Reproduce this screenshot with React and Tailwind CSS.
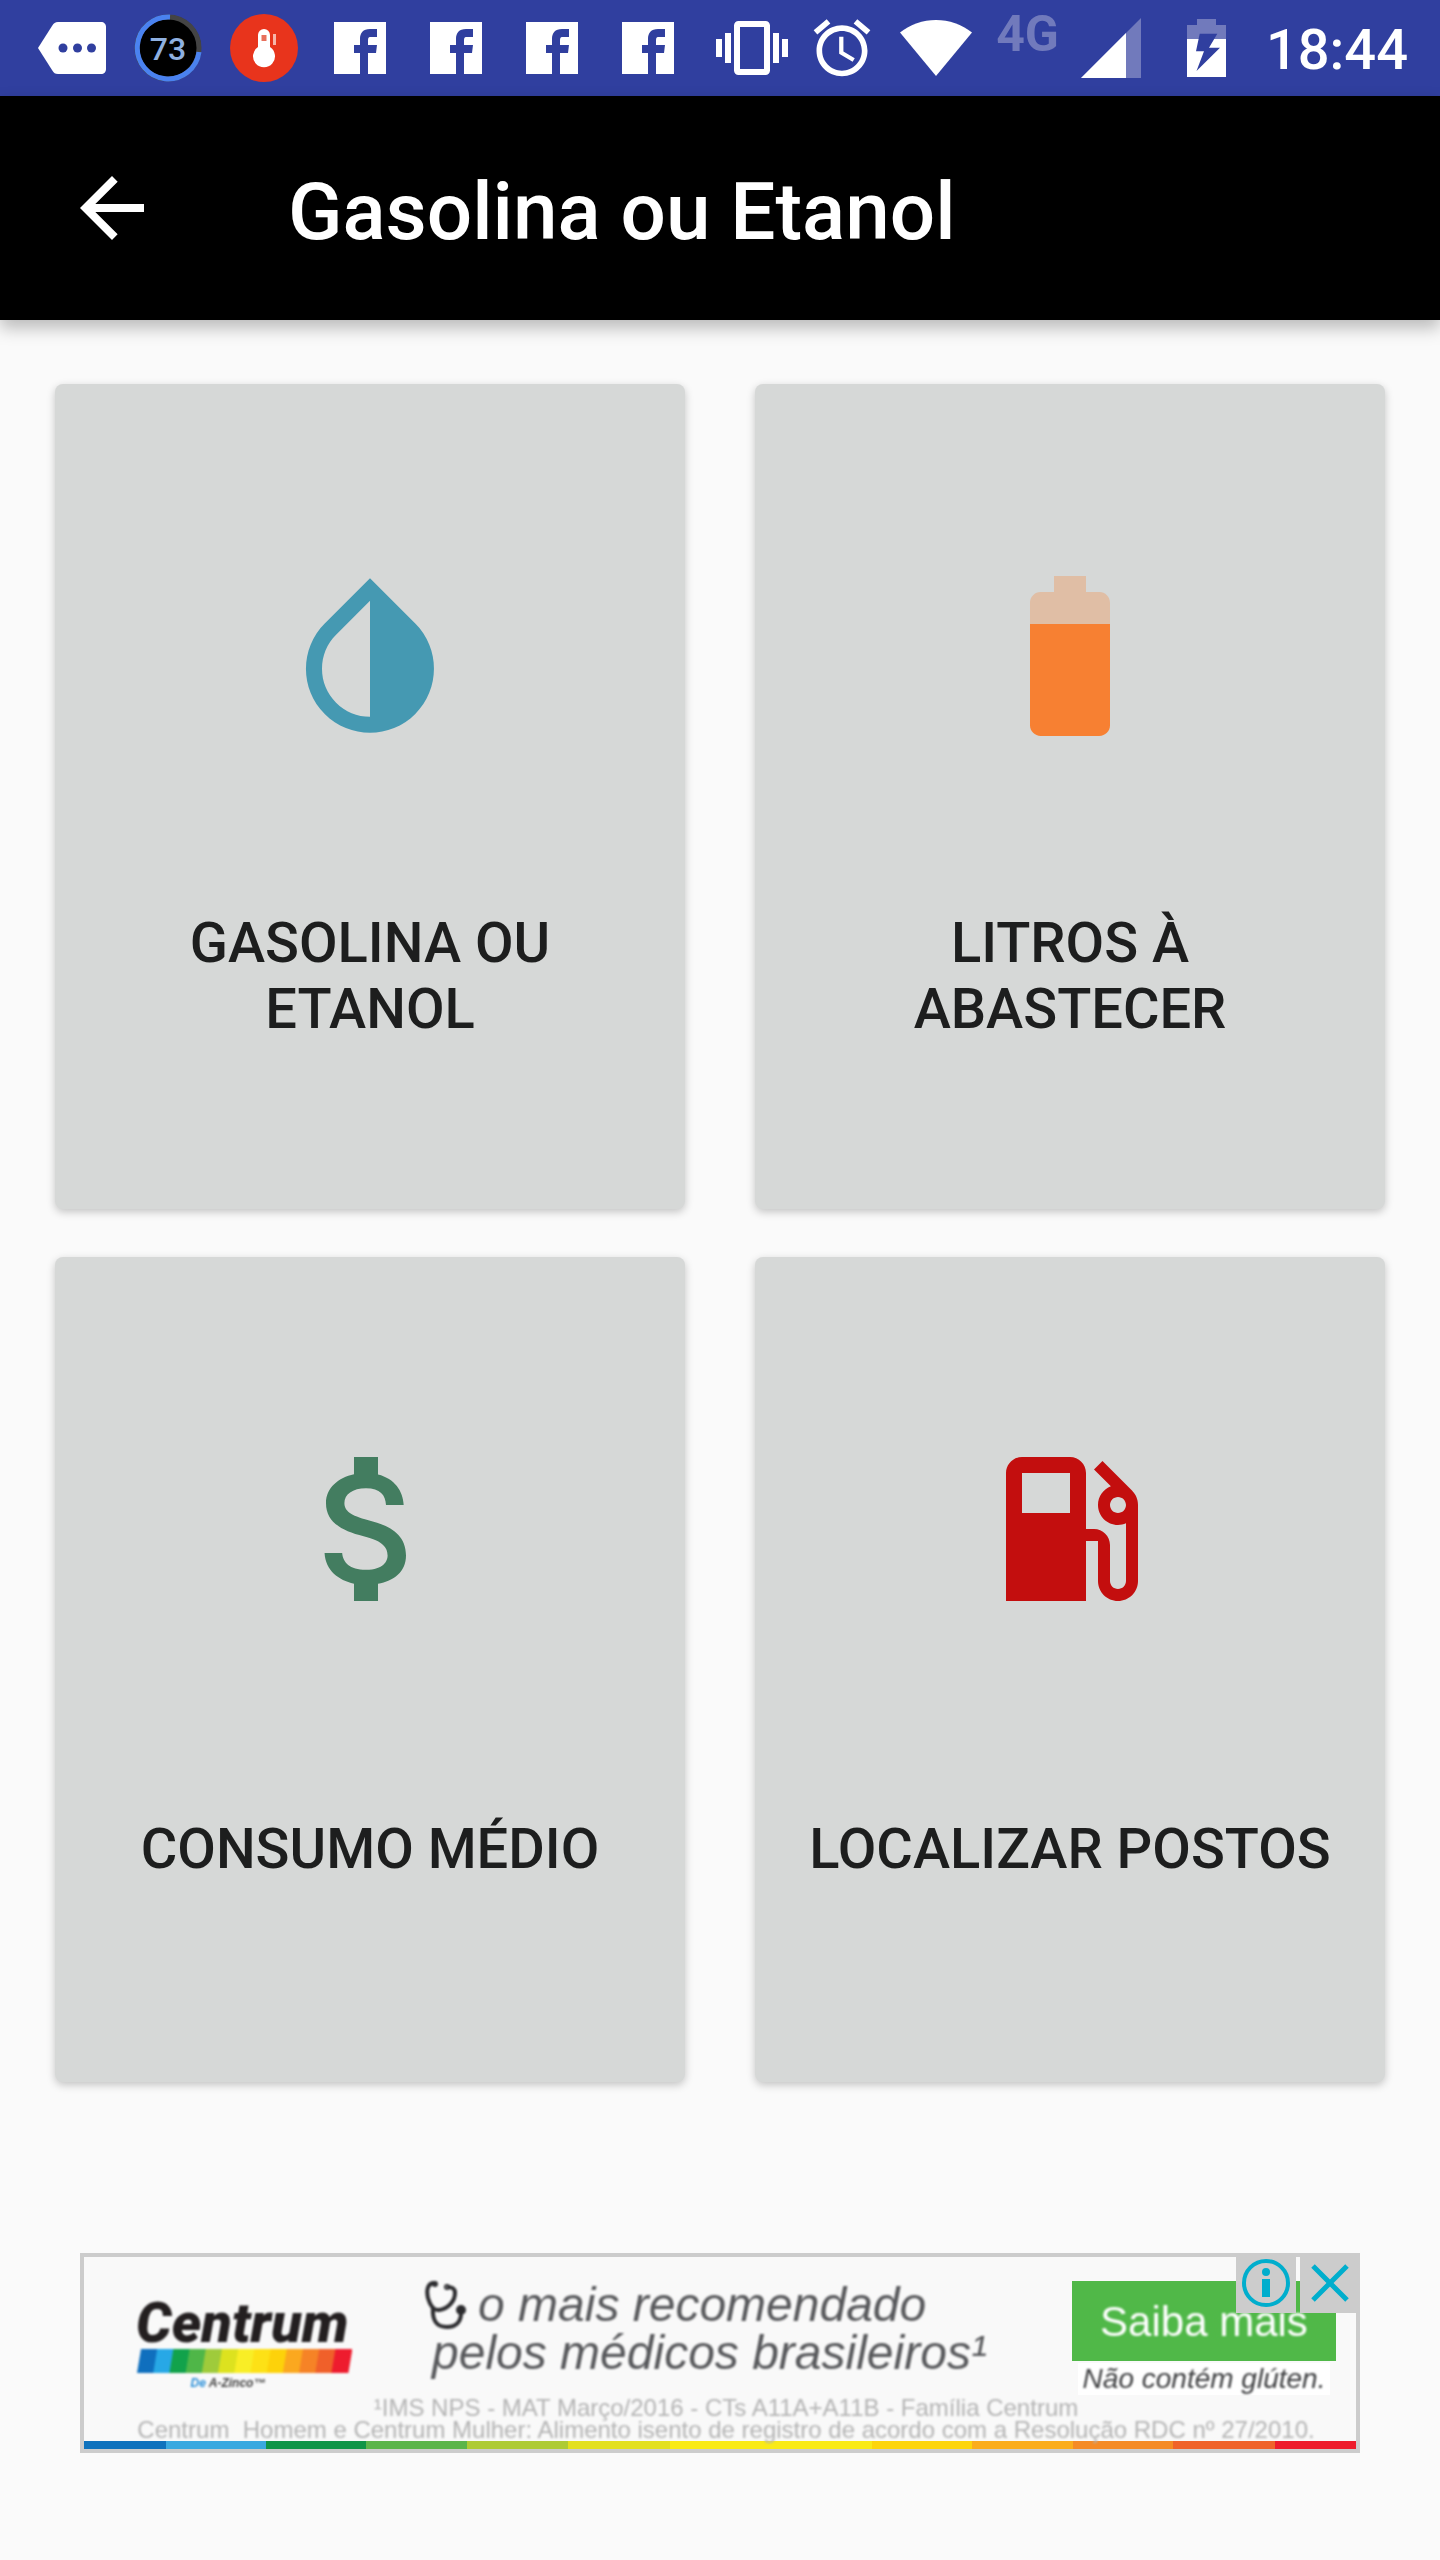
const TILES = [
  {
    label: 'GASOLINA OU ETANOL',
    color: 'text-[#4599b2]',
    shapes: (
      <path d="M17.66 7.93L12 2.27 6.34 7.93c-3.12 3.12-3.12 8.19 0 11.31C7.9 20.8 9.95 21.58 12 21.58s4.1-.78 5.66-2.34c3.12-3.12 3.12-8.19 0-11.31zM12 19.59c-1.6 0-3.11-.62-4.24-1.76C6.62 16.69 6 15.19 6 13.59s.62-3.11 1.76-4.24L12 5.1v14.49z" />
    ),
  },
  {
    label: 'LITROS À ABASTECER',
    color: 'text-[#f78032]',
    shapes: (
      <>
        <path fillOpacity=".3" d="M17 5.33C17 4.6 16.4 4 15.67 4H14V2h-4v2H8.33C7.6 4 7 4.6 7 5.33V8h10V5.33z" />
        <path d="M7 8v12.67C7 21.4 7.6 22 8.33 22h7.33c.74 0 1.34-.6 1.34-1.33V8H7z" />
      </>
    ),
  },
  {
    label: 'CONSUMO MÉDIO',
    color: 'text-[#437d60]',
    shapes: (
      <path d="M11.8 10.9c-2.27-.59-3-1.2-3-2.15 0-1.09 1.01-1.85 2.7-1.85 1.78 0 2.44.85 2.5 2.1h2.21c-.07-1.72-1.12-3.3-3.21-3.81V3h-3v2.16c-1.94.42-3.5 1.68-3.5 3.61 0 2.31 1.91 3.46 4.7 4.13 2.5.6 3 1.48 3 2.41 0 .69-.49 1.79-2.7 1.79-2.06 0-2.87-.92-2.98-2.1h-2.2c.12 2.19 1.76 3.42 3.68 3.83V21h3v-2.15c1.95-.37 3.5-1.5 3.5-3.55 0-2.84-2.43-3.81-4.7-4.4z" />
    ),
  },
  {
    label: 'LOCALIZAR POSTOS',
    color: 'text-[#c30e0e]',
    shapes: (
      <path d="M19.77 7.23l.01-.01-3.72-3.72L15 4.56l2.11 2.11c-.94.36-1.61 1.26-1.61 2.33 0 1.38 1.12 2.5 2.5 2.5.36 0 .69-.08 1-.21v7.21c0 .55-.45 1-1 1s-1-.45-1-1V14c0-1.1-.9-2-2-2h-1V5c0-1.1-.9-2-2-2H6c-1.1 0-2 .9-2 2v16h10v-7.5h1.5v5c0 1.38 1.12 2.5 2.5 2.5s2.5-1.12 2.5-2.5V9c0-.69-.28-1.32-.73-1.77zM12 10H6V5h6v5zm6 0c-.55 0-1-.45-1-1s.45-1 1-1 1 .45 1 1-.45 1-1 1z" />
    ),
  },
];

const STRIP = [
  'grow-[82] bg-[#0f72bd]',
  'grow-[100] bg-[#3aa9e0]',
  'grow-[100] bg-[#0f9547]',
  'grow-[101] bg-[#5bb54a]',
  'grow-[101] bg-[#aecb35]',
  'grow-[102] bg-[#e3e01f]',
  'grow-[202] bg-[#f9ea17]',
  'grow-[100] bg-[#fdd50c]',
  'grow-[101] bg-[#fbad1c]',
  'grow-[100] bg-[#f58b25]',
  'grow-[102] bg-[#f0632a]',
  'grow-[81] bg-[#ee1c2c]',
];

const RAINBOW = ['#0f6fbe', '#27a8e6', '#12a24b', '#4fb648', '#9fcb3b', '#dde21f', '#f9ee26', '#fde116', '#fdd20a', '#fba81f', '#f68326', '#f0602a', '#ee1c2e'];

function FacebookIcon() {
  return (
    <svg className="mx-2 h-13 w-13 flex-none" viewBox="0 0 52 52" aria-label="Facebook">
      <path fill="#fff" d="M0 0h52v52H34V31h8l1-8h-9v-5c0-2.500 1-3 3-3h6V7h-7c-7 0-10 4-10 10v6h-6v8h6v21H0z" />
    </svg>
  );
}

function StatusBar() {
  return (
    <div className="flex h-24 items-center justify-between bg-[#303f9f] pl-[38px] pr-8 text-white">
      <div className="flex items-center gap-7">
        <svg className="h-13 w-17 flex-none" viewBox="0 0 68 52" fill="#fff" aria-label="Mensagens">
          <path d="M0 26L14 4c2-3 3-4 6-4h43c3 0 5 2 5 5v42c0 3-2 5-5 5H20c-3 0-4-1-6-4z" />
          <g fill="#303f9f">
            <circle cx="25" cy="26" r="4.500" />
            <circle cx="39.500" cy="26" r="4.500" />
            <circle cx="53.500" cy="26" r="4.500" />
          </g>
        </svg>
        <div className="relative flex h-17 w-17 flex-none items-center justify-center">
          <svg className="absolute inset-0 h-17 w-17" viewBox="0 0 68 68" fill="none">
            <circle cx="34" cy="34" r="33" fill="#000" />
            <circle cx="34" cy="34" r="31" stroke="#444" strokeWidth="5" />
            <path d="M36 3a31 31 0 1 0 29 35" stroke="#4a82f0" strokeWidth="5" />
          </svg>
          <span className="relative pt-0.5 text-[32px] font-medium leading-8 text-[#8fb0e0]">73</span>
        </div>
        <svg className="h-17 w-17 flex-none" viewBox="0 0 68 68" aria-label="Temperatura">
          <circle cx="34" cy="34" r="34" fill="#e8341c" />
          <path fill="#fff" d="M28 21a6 6 0 0 1 12 0v12a11 11 0 1 1-12 0z" />
          <path d="M34 21v6" stroke="#e8705c" strokeWidth="5" />
          <path d="M44.500 20v11" stroke="#f7b5aa" strokeWidth="3" />
        </svg>
        <FacebookIcon />
        <FacebookIcon />
        <FacebookIcon />
        <FacebookIcon />
      </div>
      <div className="flex items-center">
        <svg className="h-18 w-18 flex-none" viewBox="0 0 24 24" fill="#fff" aria-label="Vibrar">
          <path d="M0 15h2V9H0v6zm3 2h2V7H3v10zm19-8v6h2V9h-2zm-3 8h2V7h-2v10zM16.500 3h-9C6.670 3 6 3.670 6 4.500v15c0 .83.67 1.500 1.500 1.500h9c.83 0 1.500-.67 1.500-1.500v-15c0-.83-.67-1.500-1.500-1.500zM16 19H8V5h8v14z" />
        </svg>
        <svg className="ml-5 h-17 w-17 flex-none" viewBox="0 0 24 24" fill="#fff" aria-label="Alarme">
          <path d="M22 5.720l-4.600-3.860-1.290 1.530 4.600 3.860L22 5.720zM7.880 3.390L6.600 1.860 2 5.710l1.290 1.530 4.590-3.850zM12.500 8H11v6l4.750 2.850.75-1.230-4-2.370V8zM12 4c-4.970 0-9 4.030-9 9s4.020 9 9 9c4.970 0 9-4.030 9-9s-4.030-9-9-9zm0 16c-3.870 0-7-3.130-7-7s3.130-7 7-7 7 3.130 7 7-3.130 7-7 7z" />
        </svg>
        <svg className="ml-6 h-14 w-18 flex-none" viewBox="0 0 72 56" fill="#fff" aria-label="Wi-Fi">
          <path d="M0 12.500C10 4.500 23 0 36 0s26 4.500 36 12.500L36 56z" />
        </svg>
        <span className="ml-6 pb-7 text-[50px] font-bold leading-[56px] text-[#717abc]">4G</span>
        <svg className="ml-[22px] h-15 w-15 flex-none" viewBox="0 0 60 60" aria-label="Sinal">
          <path fill="#717abc" d="M60 0v60H0z" />
          <path fill="#fff" d="M45 15v45H0z" />
        </svg>
        <svg className="ml-[46px] h-[58px] w-[39px] flex-none" viewBox="0 0 39 58" aria-label="Bateria">
          <path fill="#717abc" d="M0 6h10V0h19v6h10v15H0z" />
          <path fill="#fff" d="M0 20h39v38H0z" />
          <path fill="#303f9f" d="M12.700 14.700H30.300L22 28.700H33L9.500 52 17 32.300H9z" />
        </svg>
        <time className="ml-10 pt-1 text-[56px] font-medium leading-[56px]">18:44</time>
      </div>
    </div>
  );
}

function AppBar() {
  return (
    <header className="flex h-56 items-center gap-32 bg-black px-16 text-white shadow-[0_8px_16px_rgba(0,0,0,0.26)]">
      <button type="button" aria-label="Voltar" className="flex-none">
        <svg className="h-24 w-24" viewBox="0 0 24 24" fill="currentColor">
          <path d="M20 11H7.830l5.590-5.590L12 4l-8 8 8 8 1.410-1.410L7.830 13H20v-2z" />
        </svg>
      </button>
      <h1 className="pt-2 text-[80px] font-medium leading-24">Gasolina ou Etanol</h1>
    </header>
  );
}

function Tile({ label, color, shapes }) {
  return (
    <button
      type="button"
      className="flex min-h-[825px] flex-col items-center rounded-lg bg-[#d6d8d7] px-10 pb-2.5 pt-44 shadow-[0_3px_8px_rgba(0,0,0,0.22)]"
    >
      <svg className={`h-48 w-48 flex-none ${color}`} viewBox="0 0 24 24" fill="currentColor" aria-hidden="true">
        {shapes}
      </svg>
      <span className="flex flex-1 items-center text-center text-[56px] font-medium leading-[66px] text-[#1d1e1e]">
        {label}
      </span>
    </button>
  );
}

function CentrumLogo() {
  return (
    <div className="w-[216px] flex-none pt-10 blur-[1px]">
      <div className="whitespace-nowrap font-[Roboto,sans-serif] text-[56px] font-black italic leading-[52px] text-[#231f20]">
        Centrum
      </div>
      <svg className="h-6 w-[216px]" viewBox="0 0 216 24" aria-hidden="true">
        {RAINBOW.map((fill, i) => (
          <path key={fill} fill={fill} d={`M${5 + i * 16.200} 0h17l-4 24h-17z`} />
        ))}
      </svg>
      <div className="pr-8 text-center text-[12px] font-bold italic leading-5 text-[#444]">
        <span className="text-[#2a8fd8]">De </span>A-Zinco™
      </div>
    </div>
  );
}

function AdBanner() {
  return (
    <aside
      aria-label="Anúncio"
      className="relative mx-[25px] mt-[171px] border-4 border-[#cccccc] bg-[#f9f9f9] font-['Liberation_Sans',sans-serif]"
    >
      <div className="flex h-[140px] items-start pl-13 pr-5">
        <CentrumLogo />
        <div className="ml-18 whitespace-nowrap pt-6 text-[48px] italic leading-12 text-[#58595c] blur-[1px]">
          <div className="flex items-center gap-2.5">
            <svg className="h-12 w-11 flex-none" viewBox="0 0 44 48" fill="none" stroke="#2b2b2e" strokeWidth="4">
              <path d="M12 2C4 1 2 8 4 17c2 7 5 13 11 12 9-1 16-9 16-17 0-5-3-6-8-6" />
              <path d="M9 27c-1 13 4 19 14 19 9 0 14-5 14-14" />
              <circle cx="37" cy="29" r="3" fill="#2b2b2e" />
              <circle cx="11" cy="3" r="1" />
              <circle cx="23" cy="6" r="1" />
            </svg>
            <span>o mais recomendado</span>
          </div>
          <div className="pl-2">pelos médicos brasileiros¹</div>
        </div>
        <div className="ml-auto w-66 flex-none pt-6">
          <a href="#saiba-mais" className="flex h-20 items-center justify-center bg-[#50b848] pt-0.5 text-[42px] leading-12 text-white">
            <span className="blur-[1px]">Saiba mais</span>
          </a>
          <div className="mx-1.5 mt-0.5 whitespace-nowrap bg-white text-center text-[28px] italic leading-8 text-[#3f4042]">
            <span className="blur-[1px]">Não contém glúten.</span>
          </div>
        </div>
      </div>
      <div className="whitespace-nowrap pl-3 text-center text-[24px] leading-[22px] text-[#b4b4b4] blur-[1px]">
        <p>¹IMS NPS - MAT Março/2016 - CTs A11A+A11B - Família Centrum</p>
        <p>Centrum&nbsp; Homem e Centrum Mulher: Alimento isento de registro de acordo com a Resolução RDC nº 27/2010.</p>
      </div>
      <div className="flex h-2">
        {STRIP.map((segment) => (
          <div key={segment} className={segment} />
        ))}
      </div>
      <div className="absolute -right-1 -top-1 flex gap-1">
        <button type="button" aria-label="Informações do anúncio" className="bg-[#cccccc]">
          <svg className="h-15 w-15" viewBox="0 0 60 60" fill="none">
            <circle cx="30" cy="30" r="22" stroke="#00aecd" strokeWidth="4" />
            <circle cx="30" cy="19" r="4" fill="#00aecd" />
            <path d="M30 26v18" stroke="#00aecd" strokeWidth="8" />
          </svg>
        </button>
        <button type="button" aria-label="Fechar anúncio" className="bg-[#cccccc]">
          <svg className="h-15 w-15" viewBox="0 0 60 60" fill="none" stroke="#00aecd" strokeWidth="5">
            <path d="M13 13l34 34M47 13L13 47" />
          </svg>
        </button>
      </div>
    </aside>
  );
}

export default function App() {
  return (
    <div className="min-h-screen bg-[#fafafa] font-[Roboto,sans-serif]">
      <StatusBar />
      <AppBar />
      <main className="px-[55px] pb-[107px] pt-16">
        <div className="grid grid-cols-2 gap-x-[70px] gap-y-12">
          {TILES.map((tile) => (
            <Tile key={tile.label} {...tile} />
          ))}
        </div>
        <AdBanner />
      </main>
    </div>
  );
}
